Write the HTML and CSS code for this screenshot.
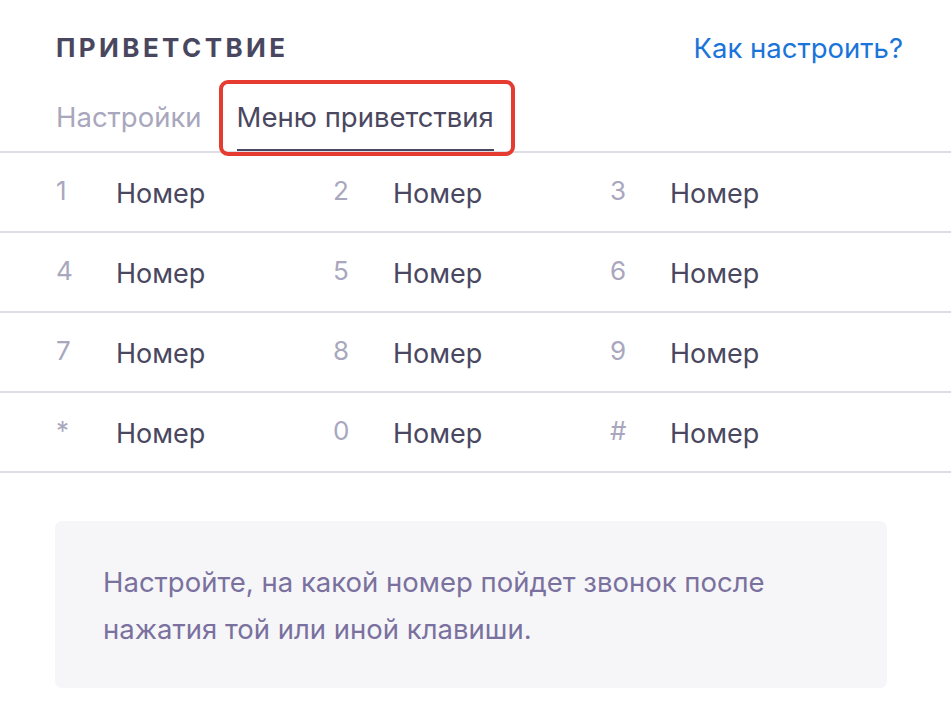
FILE: index.html
```html
<!DOCTYPE html>
<html lang="ru">
<head>
<meta charset="utf-8">
<link rel="stylesheet" href="styles.css">
</head>
<body>
<div class="page">
  <div class="header">
    <h1 class="title">ПРИВЕТСТВИЕ</h1>
    <a class="help" href="#">Как настроить?</a>
  </div>
  <div class="tabs">
    <div class="tab">Настройки</div>
    <div class="tab tab-active">Меню приветствия</div>
  </div>
  <div class="keys">
    <div class="row">
      <div class="cell"><span class="key">1</span><span class="val">Номер</span></div>
      <div class="cell"><span class="key">2</span><span class="val">Номер</span></div>
      <div class="cell"><span class="key">3</span><span class="val">Номер</span></div>
    </div>
    <div class="row">
      <div class="cell"><span class="key">4</span><span class="val">Номер</span></div>
      <div class="cell"><span class="key">5</span><span class="val">Номер</span></div>
      <div class="cell"><span class="key">6</span><span class="val">Номер</span></div>
    </div>
    <div class="row">
      <div class="cell"><span class="key">7</span><span class="val">Номер</span></div>
      <div class="cell"><span class="key">8</span><span class="val">Номер</span></div>
      <div class="cell"><span class="key">9</span><span class="val">Номер</span></div>
    </div>
    <div class="row">
      <div class="cell"><span class="key">*</span><span class="val">Номер</span></div>
      <div class="cell"><span class="key">0</span><span class="val">Номер</span></div>
      <div class="cell"><span class="key">#</span><span class="val">Номер</span></div>
    </div>
  </div>
  <div class="info">
    <p class="info-text">Настройте, на какой номер пойдет звонок после<br>нажатия той или иной клавиши.</p>
  </div>
</div>
</body>
</html>
```

FILE: styles.css
```css
* { box-sizing: border-box; }
html, body { margin: 0; padding: 0; background: #fff; }
body { font-family: Inter, "Noto Sans", sans-serif; color: #4a4760; }
.page { width: 951px; height: 718px; overflow: hidden; }
.header {
  display: flex;
  justify-content: space-between;
  align-items: flex-start;
  padding: 32px 48px 0 56px;
  height: 70px;
}
.title {
  margin: 0;
  font-size: 26px;
  line-height: 32px;
  font-weight: 700;
  letter-spacing: 3.4px;
  color: #494760;
}
.help {
  font-size: 27.5px;
  line-height: 32px;
  color: #1a74d9;
  text-decoration: none;
}
.tabs {
  display: flex;
  gap: 35px;
  padding: 30px 0 0 56px;
  border-bottom: 2px solid #dedde5;
}
.tab {
  position: relative;
  font-size: 27.5px;
  line-height: 34px;
  color: #a9a7bd;
  padding-bottom: 15px;
  border-bottom: 2px solid transparent;
}
.tab-active {
  color: #4a4760;
  border-bottom-color: #4a4760;
}
.tab-active::after {
  content: "";
  position: absolute;
  left: -18px;
  right: -21px;
  top: -20px;
  bottom: -7px;
  border: 4px solid #e53b31;
  border-radius: 9px;
}
.row {
  display: grid;
  grid-template-columns: 277px 277px 277px;
  padding: 3px 0 0 56px;
  height: 80px;
  border-bottom: 2px solid #dedde5;
}
.cell {
  display: flex;
  align-items: center;
}
.key {
  width: 60px;
  font-size: 26px;
  line-height: 34px;
  color: #a9a7bd;
  position: relative;
  top: -3px;
}
.val {
  font-size: 27px;
  line-height: 34px;
  color: #4a4760;
}
.info {
  margin: 48px 64px 0 55px;
  height: 167px;
  background: #f6f6f9;
  border-radius: 7px;
  padding: 38px 48px 0;
}
.info-text {
  margin: 0;
  font-size: 27.5px;
  line-height: 47px;
  color: #7a719e;
}
```
